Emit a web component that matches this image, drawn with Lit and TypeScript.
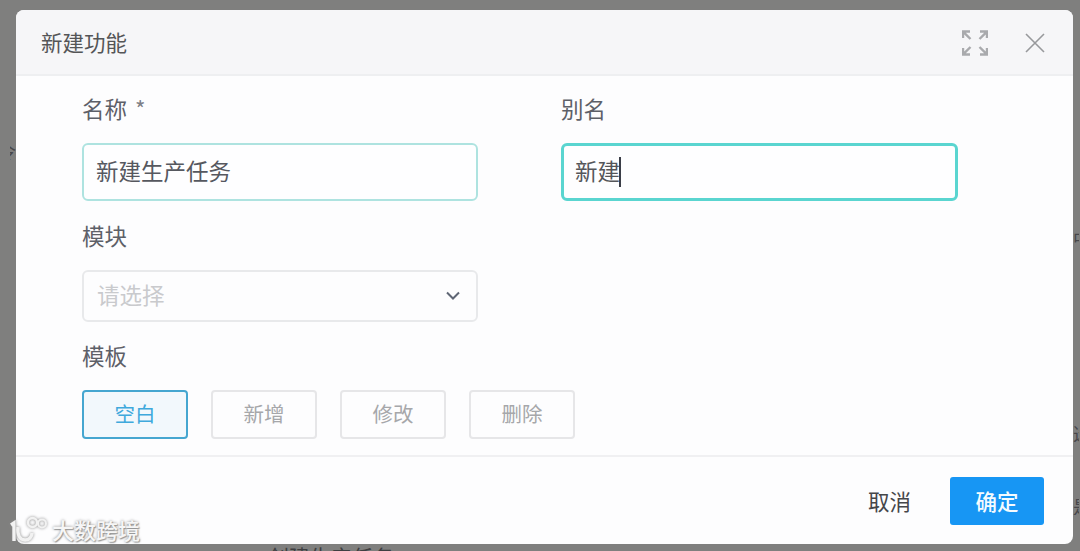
import { LitElement, html, css, svg } from "lit";
import { customElement } from "lit/decorators.js";

@customElement("app-root")
export class AppRoot extends LitElement {
  static styles = css`
    :host {
      display: block;
      width: 1080px;
      height: 551px;
      overflow: hidden;
      position: relative;
      background: #7f7f7e;
      font-family: "Noto Sans CJK SC", "Noto Sans", sans-serif;
    }
    .page {
      box-sizing: border-box;
      height: 551px;
      padding: 10px 7px 7px 16px;
      display: flex;
    }
    .modal {
      flex: 1;
      display: flex;
      flex-direction: column;
      background: #fdfdfe;
      border-radius: 8px;
      overflow: hidden;
    }
    .head {
      box-sizing: border-box;
      height: 66px;
      flex: none;
      display: flex;
      align-items: center;
      padding: 0 28px 0 25px;
      background: #f6f6f8;
      border-bottom: 2px solid #eeeff1;
      color: #545557;
      font-size: 21.5px;
    }
    .title { flex: 1; margin-top: -1px; }
    .tools { display: flex; align-items: center; gap: 37px; margin-top: 2px; }
    .tools svg { display: block; }
    .body {
      flex: 1;
      box-sizing: border-box;
      padding: 16px 115px 0 66px;
      display: flex;
      flex-direction: column;
    }
    .row {
      display: grid;
      grid-template-columns: 396px 397px;
      column-gap: 83px;
    }
    .label {
      height: 32px;
      line-height: 32px;
      font-size: 22.5px;
      color: #5d6068;
    }
    .star { color: #7d7f86; margin-left: 3px; }
    .input {
      box-sizing: border-box;
      height: 58px;
      margin-top: 19px;
      display: flex;
      align-items: center;
      padding: 0 0 4px 12px;
      border: 2px solid #aee3e0;
      border-radius: 6px;
      background: #fefeff;
      font-size: 22.5px;
      color: #56585f;
    }
    .input.focus {
      border: 3px solid #5ad5d0;
      padding-left: 11px;
      color: #55565a;
    }
    .caret {
      width: 2px;
      height: 30px;
      margin: 4px 0 0 -1px;
      background: #3b3e48;
    }
    .section-a { margin-top: 18px; }
    .select {
      box-sizing: border-box;
      width: 396px;
      height: 52px;
      margin-top: 19px;
      display: flex;
      align-items: center;
      justify-content: space-between;
      padding: 0 15px 5px 13px;
      border: 2px solid #e8e9eb;
      border-radius: 6px;
      font-size: 22.5px;
      color: #c9cacd;
    }
    .select svg { display: block; margin-top: 5px; }
    .section-b { margin-top: 17px; }
    .options { display: flex; gap: 23px; margin-top: 19px; }
    .opt {
      box-sizing: border-box;
      width: 106px;
      height: 49px;
      display: flex;
      align-items: center;
      justify-content: center;
      padding-bottom: 3px;
      border: 2px solid #e6e6e8;
      border-radius: 4px;
      font-size: 20.5px;
      color: #a6a7aa;
    }
    .opt.on {
      border-color: #45a6d0;
      background: #f2f8fc;
      color: #3fa9dc;
    }
    .foot {
      box-sizing: border-box;
      height: 89px;
      flex: none;
      display: flex;
      align-items: center;
      justify-content: flex-end;
      gap: 39px;
      padding: 0 29px 0 0;
      border-top: 2px solid #f0f0f2;
    }
    .cancel { font-size: 21.5px; color: #45464a; }
    .ok {
      width: 94px;
      height: 48px;
      display: flex;
      align-items: center;
      justify-content: center;
      border-radius: 3px;
      background: #1796f4;
      color: #f4fbff;
      font-size: 21.5px;
      font-weight: 500;
    }
    .behind {
      position: absolute;
      color: #47474b;
      font-size: 18px;
      line-height: 1;
      white-space: nowrap;
      overflow: hidden;
    }
    .b1 { left: 10px; top: 142px; width: 6px; direction: rtl; }
    .b2 { left: 268px; top: 546px; font-size: 21px; color: #3f3f42; }
    .b4 { left: 1073px; top: 229px; width: 6px; }
    .b5 { left: 1073px; top: 424px; width: 6px; }
    .b6 { left: 1073px; top: 497px; width: 6px; }
    .mark {
      position: absolute;
      left: 9px;
      top: 515px;
      display: flex;
      align-items: flex-end;
      gap: 4px;
      color: #f6f6f6;
      font-size: 22px;
      line-height: 26px;
      font-weight: 500;
      text-shadow: 0 0 3px #8c8c8c, 1px 1px 1px #a0a0a0;
    }
    .mark svg { display: block; filter: drop-shadow(0 0 1.5px #8c8c8c); }
  `;

  private expandIcon() {
    return svg`<svg width="26" height="26" viewBox="0 0 26 26" fill="none" stroke="#a9aaad" stroke-width="2.4">
      <path d="M1 8V1.5H8M1.8 2.3L8.5 9" />
      <path d="M25 8V1.5H18M24.2 2.3L17.5 9" />
      <path d="M1 18V24.5H8M1.8 23.7L8.5 17" />
      <path d="M25 18V24.5H18M24.2 23.7L17.5 17" />
    </svg>`;
  }

  render() {
    return html`
      <div class="page">
        <div class="modal">
          <div class="head">
            <div class="title">新建功能</div>
            <div class="tools">
              ${this.expandIcon()}
              <svg width="20" height="20" viewBox="0 0 20 20" fill="none" stroke="#98999c" stroke-width="1.6">
                <path d="M1 1L19 19M19 1L1 19" />
              </svg>
            </div>
          </div>
          <div class="body">
            <div class="row">
              <div>
                <div class="label">名称<span class="star"> *</span></div>
                <div class="input">新建生产任务</div>
              </div>
              <div>
                <div class="label">别名</div>
                <div class="input focus">新建<span class="caret"></span></div>
              </div>
            </div>
            <div class="section-a">
              <div class="label">模块</div>
              <div class="select">
                <span>请选择</span>
                <svg width="16" height="10" viewBox="0 0 16 10" fill="none" stroke="#5f6675" stroke-width="2">
                  <path d="M2 1.5L8 7.5L14 1.5" />
                </svg>
              </div>
            </div>
            <div class="section-b">
              <div class="label">模板</div>
              <div class="options">
                <div class="opt on">空白</div>
                <div class="opt">新增</div>
                <div class="opt">修改</div>
                <div class="opt">删除</div>
              </div>
            </div>
          </div>
          <div class="foot">
            <div class="cancel">取消</div>
            <div class="ok">确定</div>
          </div>
        </div>
      </div>
      <div class="behind b1">令</div>
      <div class="behind b2">创建生产任务</div>
      <div class="behind b4">中</div>
      <div class="behind b5">选</div>
      <div class="behind b6">是</div>
      <div class="mark">
        <svg width="39" height="27" viewBox="0 0 39 27" fill="none" stroke="#f2f2f2" stroke-width="2.4">
          <path d="M2 10L5 8V26" stroke-width="3.4" />
          <path d="M9 12C8 20 11 25 16 25C20 25 23 22 23 18" stroke-width="3.4" />
          <circle cx="23.5" cy="7.5" r="4.5" />
          <circle cx="33" cy="8.5" r="4" stroke-width="2" />
        </svg>
        <span>大数跨境</span>
      </div>
    `;
  }
}
